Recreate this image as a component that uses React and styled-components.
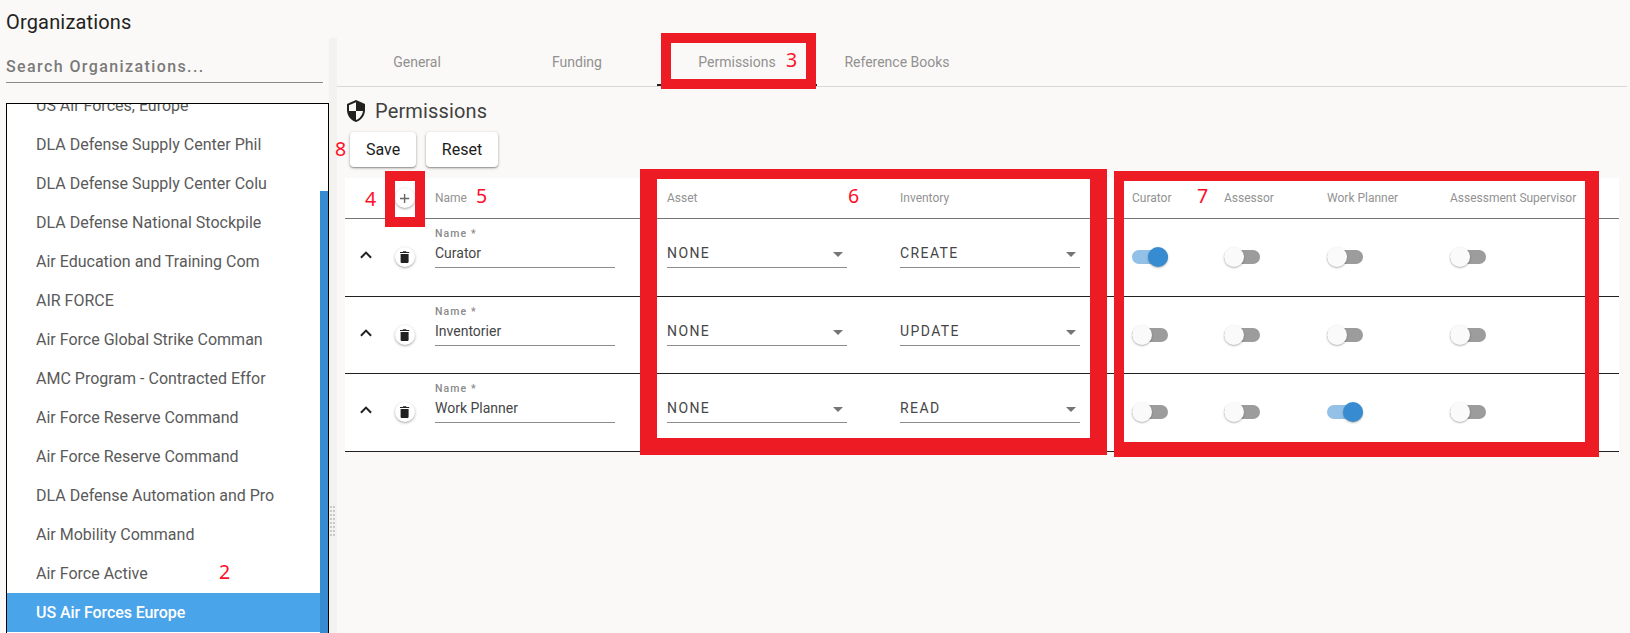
import React from 'react';
import styled, { createGlobalStyle } from 'styled-components';
import { MdSecurity } from 'react-icons/md';

const GlobalStyle = createGlobalStyle`
  *, *::before, *::after { box-sizing: border-box; }
  body { margin: 0; background: #faf9f7; font-family: Roboto, "Liberation Sans", sans-serif; color: #222; }
`;

const Page = styled.div`
  position: relative;
  display: flex;
  flex-direction: column;
  width: 1630px;
  height: 633px;
  overflow: hidden;
  background: #faf9f7;
`;

const PageTitle = styled.h1`
  margin: 0;
  height: 38px;
  padding: 7px 0 0 6px;
  font-size: 20px;
  line-height: 30px;
  font-weight: 400;
  letter-spacing: 0.17px;
`;

const Split = styled.div`
  display: flex;
  flex: 1;
  min-height: 0;
`;

const Sidebar = styled.aside`
  display: flex;
  flex-direction: column;
  width: 329px;
  padding-left: 6px;
`;

const Search = styled.div`
  width: 317px;
  height: 45px;
  padding-top: 17px;
  border-bottom: 1px solid #8c8b8a;
  font-size: 16px;
  line-height: 24px;
  font-weight: 500;
  letter-spacing: 1.4px;
  color: #7a7a7a;
  white-space: nowrap;
`;

const ListBox = styled.div`
  display: flex;
  flex: 1;
  min-height: 0;
  margin-top: 20px;
  border: 1px solid #000;
  border-bottom: 0;
  background: #fff;
  overflow: hidden;
`;

const List = styled.div`
  flex: 1;
  margin-top: -18px;
`;

const ListItem = styled.div`
  height: 39px;
  padding-left: 29px;
  font-size: 16px;
  line-height: 39px;
  white-space: nowrap;
  font-weight: ${(p) => (p.$selected ? 500 : 400)};
  letter-spacing: ${(p) => (p.$selected ? '-0.08px' : '0')};
  color: ${(p) => (p.$selected ? '#fff' : '#5a5a5a')};
  background: ${(p) => (p.$selected ? '#49a4ea' : 'transparent')};
`;

const ScrollThumb = styled.div`
  width: 8px;
  margin-top: 87px;
  background: #378bd0;
`;

const Gutter = styled.div`
  display: flex;
  width: 8px;
  padding: 468px 0 0 1px;
  background: #f3f2f1;
`;

const Grip = styled.div`
  display: grid;
  grid-template-columns: 2px 2px;
  grid-auto-rows: 2px;
  gap: 2px 1px;
`;

const Dot = styled.i`
  background: #cbcac9;
`;

const Main = styled.main`
  flex: 1;
  padding-right: 3px;
`;

const Tabs = styled.nav`
  display: flex;
  height: 49px;
  border-bottom: 1px solid #d9d8d6;
`;

const Tab = styled.div`
  width: 160px;
  height: 48px;
  border-bottom: 2px solid ${(p) => (p.$active ? '#222' : 'transparent')};
  font-size: 14px;
  line-height: 48px;
  text-align: center;
  color: #929190;
`;

const Heading = styled.h2`
  display: flex;
  align-items: center;
  gap: 7px;
  height: 24px;
  margin: 12px 0 9px 7px;
  font-size: 20px;
  font-weight: 400;
  letter-spacing: 0.15px;
  color: #414141;

  svg { color: #212121; }
`;

const Actions = styled.div`
  display: flex;
  gap: 10px;
  margin: 0 0 11px 13px;
`;

const Button = styled.button`
  width: ${(p) => p.$width}px;
  height: 35px;
  padding: 0;
  border: 0;
  border-radius: 4px;
  background: #fff;
  box-shadow: 0 1px 3px rgba(0, 0, 0, 0.35), 0 1px 1px rgba(0, 0, 0, 0.18);
  font: 400 16px/35px Roboto, "Liberation Sans", sans-serif;
  color: #1c1c1c;
`;

const Table = styled.div`
  width: 1274px;
  margin-left: 8px;
  background: #fff;
`;

const Row = styled.div`
  display: grid;
  grid-template-columns: 45px 45px 232px 233px 232px 92px 103px 123px 1fr;
  height: ${(p) => p.$height}px;
  border-bottom: 1px solid #212121;
`;

const HeaderRow = styled(Row)`
  border-bottom-color: #757575;
  font-size: 12px;
  line-height: 40px;
  color: #929292;
`;

const IconCell = styled.div`
  display: flex;
  padding-top: ${(p) => p.$top}px;
  padding-left: ${(p) => p.$left}px;
`;

const RoundButton = styled.div`
  display: flex;
  align-items: center;
  justify-content: center;
  width: 20px;
  height: 20px;
  border-radius: 50%;
  background: #fff;
  box-shadow: 0 1px 3px rgba(0, 0, 0, 0.3), 0 1px 1px rgba(0, 0, 0, 0.08);
`;

const Field = styled.div`
  width: 180px;
  height: 49px;
  border-bottom: 1px solid #8c8c8c;
  color: #464646;
`;

const FieldLabel = styled.div`
  height: 23px;
  padding-top: 7px;
  font-size: 10.5px;
  line-height: 16px;
  font-weight: 500;
  letter-spacing: 1.1px;
  color: #8a8a8a;
`;

const FieldValue = styled.div`
  display: flex;
  justify-content: space-between;
  height: 22px;
  font-size: 14px;
  line-height: 22px;
  letter-spacing: ${(p) => (p.$spaced ? '1.4px' : '0')};
`;

const Caret = styled.i`
  width: 0;
  height: 0;
  margin: 10px 4px 0 0;
  border: 5px solid transparent;
  border-top-color: #757575;
  border-bottom: 0;
`;

const Track = styled.div`
  display: flex;
  align-items: center;
  justify-content: ${(p) => (p.$on ? 'flex-end' : 'flex-start')};
  width: 36px;
  height: 14px;
  margin-top: 31px;
  border-radius: 7px;
  background: ${(p) => (p.$on ? '#92c0e6' : '#9c9c9c')};
`;

const Thumb = styled.div`
  width: 20px;
  height: 20px;
  border-radius: 50%;
  background: ${(p) => (p.$on ? '#378bd0' : '#fafafa')};
  box-shadow: 0 1px 2px rgba(0, 0, 0, 0.3);
`;

/* Callouts drawn over the interface */
const Frame = styled.div`
  position: absolute;
  left: ${(p) => p.$x}px;
  top: ${(p) => p.$y}px;
  width: ${(p) => p.$w}px;
  height: ${(p) => p.$h}px;
  border: solid #ed1c24;
  border-width: ${(p) => p.$edge};
`;

const Marker = styled.span`
  position: absolute;
  left: ${(p) => p.$x}px;
  top: ${(p) => p.$y}px;
  width: 12px;
  font: 400 19.5px/20px "Noto Sans", "Open Sans", sans-serif;
  text-align: center;
  color: #ff0f27;
`;

const organizations = [
  'US Air Forces, Europe',
  'DLA Defense Supply Center Phil',
  'DLA Defense Supply Center Colu',
  'DLA Defense National Stockpile',
  'Air Education and Training Com',
  'AIR FORCE',
  'Air Force Global Strike Comman',
  'AMC Program - Contracted Effor',
  'Air Force Reserve Command',
  'Air Force Reserve Command',
  'DLA Defense Automation and Pro',
  'Air Mobility Command',
  'Air Force Active',
  'US Air Forces Europe',
];

const roles = [
  { name: 'Curator', asset: 'NONE', inventory: 'CREATE', flags: [true, false, false, false], height: 78 },
  { name: 'Inventorier', asset: 'NONE', inventory: 'UPDATE', flags: [false, false, false, false], height: 77 },
  { name: 'Work Planner', asset: 'NONE', inventory: 'READ', flags: [false, false, true, false], height: 78 },
];

const frames = [
  { x: 661, y: 33, w: 155, h: 56, edge: '10px' },
  { x: 385, y: 171, w: 40, h: 56, edge: '10px' },
  { x: 640, y: 169, w: 467, h: 286, edge: '10px 17px 17px' },
  { x: 1114, y: 171, w: 485, h: 286, edge: '10px 14px 15px 10px' },
];

const markers = [
  { n: 2, x: 218.5, y: 562 },
  { n: 3, x: 785.5, y: 50 },
  { n: 4, x: 364.5, y: 189 },
  { n: 5, x: 475.5, y: 186 },
  { n: 6, x: 847.5, y: 186 },
  { n: 7, x: 1196.5, y: 186 },
  { n: 8, x: 334.5, y: 139 },
];

const ChevronUp = () => (
  <svg width="12" height="8" viewBox="0 0 12 8" fill="none" stroke="#212121" strokeWidth="2">
    <path d="M.9 6.7 6 1.6l5.1 5.1" />
  </svg>
);

const Plus = () => (
  <svg width="10" height="10" viewBox="0 0 10 10" fill="none" stroke="#666" strokeWidth="1.4">
    <path d="M0 5.5h9.2M4.6 .9v9.1" />
  </svg>
);

const Trash = () => (
  <svg width="10" height="12" viewBox="0 0 10 12" fill="#212121">
    <path d="M0 1h2.6L3.3.2h2.6L6.6 1h2.6v1.1H0zM.6 3h8v7.7c0 .7-.6 1.3-1.3 1.3H1.9C1.2 12 .6 11.4 .6 10.7z" />
  </svg>
);

function Select({ value }) {
  return (
    <Field>
      <FieldLabel />
      <FieldValue $spaced>
        {value}
        <Caret />
      </FieldValue>
    </Field>
  );
}

function Toggle({ on }) {
  return (
    <Track $on={on}>
      <Thumb $on={on} />
    </Track>
  );
}

function RoleRow({ role }) {
  return (
    <Row $height={role.height}>
      <IconCell $top={32} $left={15}><ChevronUp /></IconCell>
      <IconCell $top={28} $left={5}>
        <RoundButton><Trash /></RoundButton>
      </IconCell>
      <Field>
        <FieldLabel>Name *</FieldLabel>
        <FieldValue>{role.name}</FieldValue>
      </Field>
      <Select value={role.asset} />
      <Select value={role.inventory} />
      {role.flags.map((on, i) => <Toggle key={i} on={on} />)}
    </Row>
  );
}

export default function App() {
  return (
    <Page>
      <GlobalStyle />
      <PageTitle>Organizations</PageTitle>
      <Split>
        <Sidebar>
          <Search>Search Organizations...</Search>
          <ListBox>
            <List>
              {organizations.map((name, i) => (
                <ListItem key={i} $selected={i === organizations.length - 1}>{name}</ListItem>
              ))}
            </List>
            <ScrollThumb />
          </ListBox>
        </Sidebar>
        <Gutter>
          <Grip>{Array.from({ length: 16 }, (_, i) => <Dot key={i} />)}</Grip>
        </Gutter>
        <Main>
          <Tabs>
            <Tab>General</Tab>
            <Tab>Funding</Tab>
            <Tab $active>Permissions</Tab>
            <Tab>Reference Books</Tab>
          </Tabs>
          <Heading><MdSecurity size={24} />Permissions</Heading>
          <Actions>
            <Button $width={66}>Save</Button>
            <Button $width={72}>Reset</Button>
          </Actions>
          <Table>
            <HeaderRow $height={41}>
              <span />
              <IconCell $top={10} $left={5}>
                <RoundButton><Plus /></RoundButton>
              </IconCell>
              <span>Name</span>
              <span>Asset</span>
              <span>Inventory</span>
              <span>Curator</span>
              <span>Assessor</span>
              <span>Work Planner</span>
              <span>Assessment Supervisor</span>
            </HeaderRow>
            {roles.map((role) => <RoleRow key={role.name} role={role} />)}
          </Table>
        </Main>
      </Split>
      {frames.map((f) => <Frame key={f.x} $x={f.x} $y={f.y} $w={f.w} $h={f.h} $edge={f.edge} />)}
      {markers.map((m) => <Marker key={m.n} $x={m.x} $y={m.y}>{m.n}</Marker>)}
    </Page>
  );
}
